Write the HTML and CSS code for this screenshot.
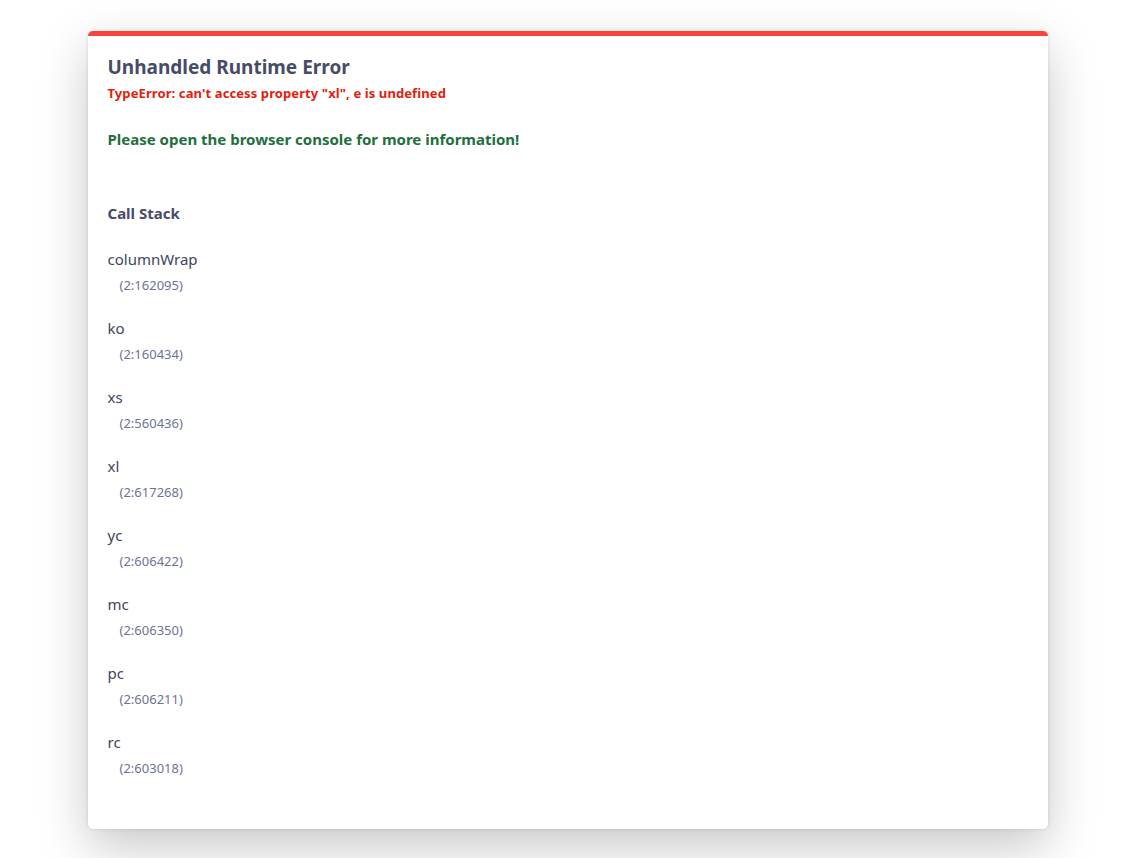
FILE: index.html
```html
<!DOCTYPE html>
<html lang="en">
<head>
<meta charset="utf-8">
<title>Unhandled Runtime Error</title>
<link rel="stylesheet" href="styles.css">
</head>
<body>
<div class="overlay">
  <div class="card">
    <h1 class="title">Unhandled Runtime Error</h1>
    <div class="error-msg">TypeError: can't access property "xl", e is undefined</div>
    <div class="hint">Please open the browser console for more information!</div>
    <h2 class="stack-title">Call Stack</h2>
    <div class="frames">
      <div class="frame"><div class="fn">columnWrap</div><div class="loc">(2:162095)</div></div>
      <div class="frame"><div class="fn">ko</div><div class="loc">(2:160434)</div></div>
      <div class="frame"><div class="fn">xs</div><div class="loc">(2:560436)</div></div>
      <div class="frame"><div class="fn">xl</div><div class="loc">(2:617268)</div></div>
      <div class="frame"><div class="fn">yc</div><div class="loc">(2:606422)</div></div>
      <div class="frame"><div class="fn">mc</div><div class="loc">(2:606350)</div></div>
      <div class="frame"><div class="fn">pc</div><div class="loc">(2:606211)</div></div>
      <div class="frame"><div class="fn">rc</div><div class="loc">(2:603018)</div></div>
    </div>
  </div>
</div>
</body>
</html>
```
FILE: styles.css
```css
html, body {
  margin: 0;
  padding: 0;
  background: #ffffff;
  font-family: "Noto Sans", "Open Sans", sans-serif;
}
.overlay {
  padding: 31px 1px 0 0;
  min-height: 858px;
  box-sizing: border-box;
}
.card {
  width: 960px;
  margin: 0 auto;
  box-sizing: border-box;
  background: #ffffff;
  border-top: 5px solid #f8443a;
  border-radius: 5px;
  box-shadow: 0 18px 50px rgba(0, 0, 0, 0.22), 0 0 4px rgba(0, 0, 0, 0.12);
  padding: 19px 20px 52px;
}
.title {
  margin: 0;
  font-size: 19px;
  line-height: 24px;
  font-weight: 700;
  color: #474c66;
}
.error-msg {
  margin-top: 5px;
  font-size: 13px;
  line-height: 18px;
  font-weight: 700;
  letter-spacing: 0.1px;
  color: #e3200c;
}
.hint {
  margin-top: 27px;
  font-size: 15px;
  line-height: 20px;
  font-weight: 700;
  color: #1f6e3e;
}
.stack-title {
  margin: 54px 0 0;
  font-size: 15px;
  line-height: 20px;
  font-weight: 700;
  color: #474c66;
}
.frames {
  display: flex;
  flex-direction: column;
  gap: 24px;
  margin-top: 26px;
}
.fn {
  font-size: 15px;
  line-height: 20px;
  color: #40455e;
}
.loc {
  margin-top: 7px;
  padding-left: 12px;
  font-size: 13px;
  line-height: 18px;
  color: #6c7394;
}
```
